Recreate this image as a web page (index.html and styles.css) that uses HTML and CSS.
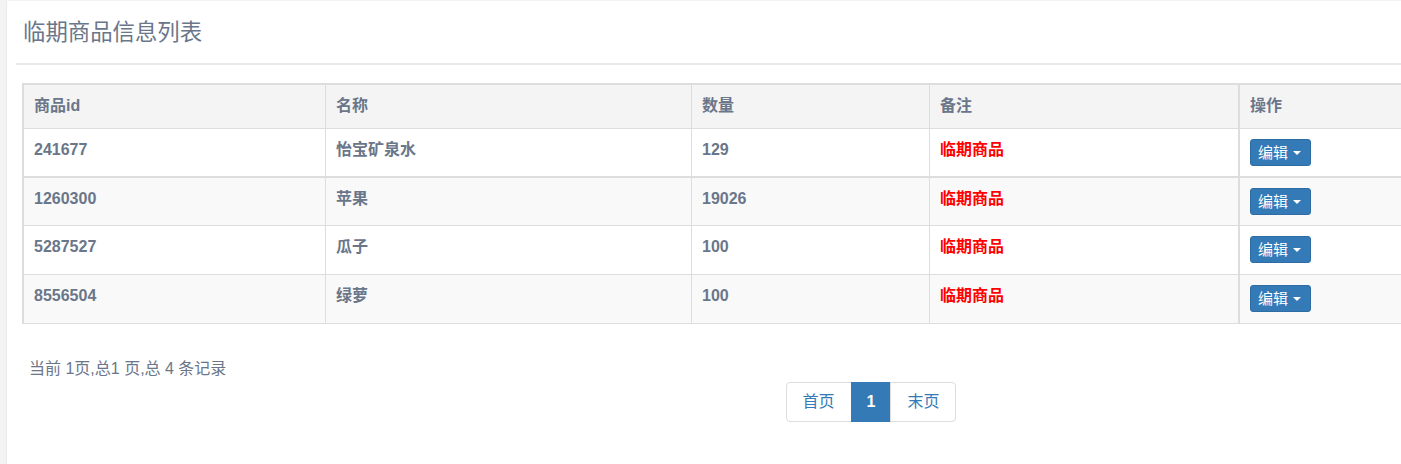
FILE: index.html
```html
<!DOCTYPE html>
<html lang="zh-CN">
<head>
<meta charset="utf-8">
<title>临期商品信息列表</title>
<link rel="stylesheet" href="styles.css">
</head>
<body>
<div class="page">
  <div class="panel">
    <div class="content">
      <div class="title">临期商品信息列表</div>
      <div class="table-wrap">
        <table class="grid">
          <colgroup>
            <col class="c1"><col class="c2"><col class="c3"><col class="c4"><col class="c5">
          </colgroup>
          <thead>
            <tr><th>商品id</th><th>名称</th><th>数量</th><th class="sep">备注</th><th>操作</th></tr>
          </thead>
          <tbody>
            <tr class="first"><td>241677</td><td>怡宝矿泉水</td><td>129</td><td class="sep"><span class="warn">临期商品</span></td><td><button class="btn">编辑 <span class="caret"></span></button></td></tr>
            <tr class="alt"><td>1260300</td><td>苹果</td><td>19026</td><td class="sep"><span class="warn">临期商品</span></td><td><button class="btn">编辑 <span class="caret"></span></button></td></tr>
            <tr class="tall"><td>5287527</td><td>瓜子</td><td>100</td><td class="sep"><span class="warn">临期商品</span></td><td><button class="btn">编辑 <span class="caret"></span></button></td></tr>
            <tr class="alt tall"><td>8556504</td><td>绿萝</td><td>100</td><td class="sep"><span class="warn">临期商品</span></td><td><button class="btn">编辑 <span class="caret"></span></button></td></tr>
          </tbody>
        </table>
        <div class="summary">当前 1页,总1 页,总 4 条记录</div>
        <div class="pager-row">
          <ul class="pager">
            <li><a class="pg">首页</a></li>
            <li><a class="pg active">1</a></li>
            <li><a class="pg">末页</a></li>
          </ul>
        </div>
      </div>
    </div>
  </div>
</div>
</body>
</html>
```
FILE: styles.css
```css
html, body {
  margin: 0;
  padding: 0;
}
body {
  background: #f3f3f4;
  font-family: "Liberation Sans", "Noto Sans CJK SC", sans-serif;
  color: #6a7689;
  overflow: hidden;
}
.page {
  padding: 1px 0 0 6px;
}
.panel {
  background: #ffffff;
  border-left: 1px solid #e7eaec;
  height: 463px;
  overflow: hidden;
}
.content {
  width: 1710px;
  margin-left: 9px;
}
.title {
  font-size: 22.4px;
  line-height: 24px;
  padding: 20px 0 18px 7px;
  border-bottom: 2px solid #e7eaec;
}
.table-wrap {
  padding: 18px 6px 0;
}
.grid {
  border-collapse: separate;
  border-spacing: 0;
  table-layout: fixed;
  width: 1698px;
  border-top: 2px solid #dddddd;
  border-left: 2px solid #dddddd;
  font-size: 16px;
  font-weight: bold;
}
.c1 { width: 302px; }
.c2 { width: 366px; }
.c3 { width: 238px; }
.c4 { width: 310px; }
.grid th, .grid td {
  text-align: left;
  border-right: 1px solid #dddddd;
  border-bottom: 1px solid #dddddd;
  padding: 10px 10px 10px 10px;
  line-height: 22px;
  vertical-align: top;
  white-space: nowrap;
}
.grid th {
  background: #f4f4f4;
  padding: 10px 10px 11px 10px;
}
.grid th.sep, .grid td.sep {
  border-right-width: 2px;
}
.grid td {
  background: #ffffff;
}
.grid tr.alt td {
  background: #f9f9f9;
}
.grid tr.first td {
  border-bottom-width: 2px;
}
.grid tr.tall td {
  padding-bottom: 11px;
}
.warn {
  color: #ff0000;
}
.btn {
  display: inline-flex;
  align-items: center;
  vertical-align: top;
  height: 27px;
  box-sizing: border-box;
  padding: 0 9px 0 7px;
  background: #337ab7;
  border: 1px solid #2e6da4;
  border-radius: 3px;
  color: #ffffff;
  font-family: "Liberation Sans", "Noto Sans CJK SC", sans-serif;
  font-size: 15px;
  font-weight: normal;
  line-height: 19px;
  white-space: pre;
}
.caret {
  display: inline-block;
  width: 0;
  height: 0;
  border-top: 4px solid #ffffff;
  border-left: 4px solid transparent;
  border-right: 4px solid transparent;
  margin-left: 1px;
}
.summary {
  margin-top: 34px;
  padding-left: 7px;
  font-size: 16px;
  line-height: 22px;
}
.pager-row {
  text-align: center;
  margin-top: 2px;
}
.pager {
  display: inline-flex;
  list-style: none;
  margin: 0;
  padding: 0;
}
.pager li + li {
  margin-left: -1px;
}
.pg {
  display: block;
  padding: 8px 16px;
  line-height: 22px;
  font-size: 16px;
  color: #337ab7;
  background: #ffffff;
  border: 1px solid #dddddd;
}
.pager li:first-child .pg {
  border-radius: 4px 0 0 4px;
}
.pager li:last-child .pg {
  border-radius: 0 4px 4px 0;
}
.pg.active {
  background: #337ab7;
  border-color: #337ab7;
  color: #ffffff;
  font-weight: bold;
  padding: 8px 15px;
}
```
